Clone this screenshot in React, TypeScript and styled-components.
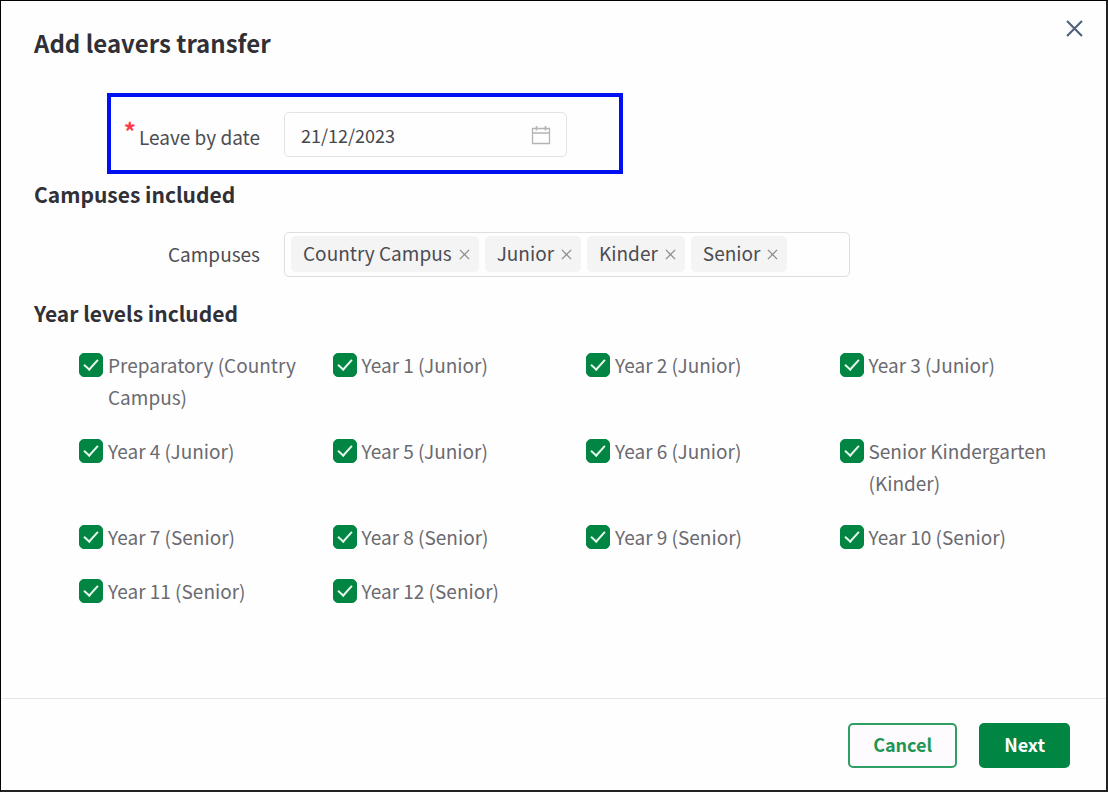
import React, { useState } from "react";
import styled, { createGlobalStyle } from "styled-components";

const GlobalStyle = createGlobalStyle`
  *, *::before, *::after { box-sizing: border-box; }
  body {
    margin: 0;
    background: #fefefe;
    color: #303036;
    font-family: "Noto Sans CJK SC", "Open Sans", sans-serif;
    font-size: 19px;
    line-height: 32px;
  }
  button, input { font: inherit; }
`;

const Dialog = styled.main`
  display: flex;
  flex-direction: column;
  min-height: 100vh;
  border: 1px solid #000;
  border-right: 2px solid #222;
  border-bottom: 2px solid #222;
  background: #fefefe;
`;

const Header = styled.header`
  display: flex;
  justify-content: space-between;
  align-items: flex-start;
  padding: 16px 20px 0 33px;
`;

const Title = styled.h1`
  margin: 10px 0 0;
  font-size: 24px;
  font-weight: 700;
  line-height: 32px;
`;

const CloseButton = styled.button`
  display: flex;
  padding: 1px;
  border: 0;
  background: none;
  color: #50607a;
  cursor: pointer;
`;

const Body = styled.form`
  display: flex;
  flex-direction: column;
  flex: 1;
`;

const Highlight = styled.div`
  width: 516px;
  max-width: calc(100% - 106px);
  margin: 34px 0 4px 106px;
  padding: 15px 0 13px;
  border: 4px solid #0010f0;
`;

const FormRow = styled.div<{ $label: number }>`
  display: grid;
  grid-template-columns: ${(p) => p.$label}px minmax(0, 1fr);
  column-gap: 24px;
  align-items: center;
`;

const FieldLabel = styled.label<{ $required?: boolean }>`
  padding-top: ${(p) => (p.$required ? 4 : 0)}px;
  padding-bottom: ${(p) => (p.$required ? 0 : 2)}px;
  text-align: right;
  color: #4c4c52;
  white-space: nowrap;
`;

const Required = styled.span`
  position: relative;
  top: -4px;
  margin-right: 3px;
  color: #ff3b46;
  font-weight: 700;
  font-size: 24px;
  line-height: 20px;
`;

const DateField = styled.div`
  display: flex;
  align-items: center;
  width: 283px;
  height: 45px;
  padding: 0 15px 0 16px;
  border: 1px solid #dfe5e2;
  border-radius: 5px;
  color: #b4b4b4;
`;

const DateInput = styled.input`
  flex: 1;
  min-width: 0;
  padding: 0;
  border: 0;
  outline: 0;
  background: none;
  color: #46464c;
  font-size: 18px;
`;

const SectionTitle = styled.h2`
  margin: 0 33px;
  font-size: 21px;
  font-weight: 700;
  line-height: 32px;
`;

const CampusRow = styled(FormRow)`
  margin: 22px 0 20px;
`;

const TagSelect = styled.div`
  display: flex;
  gap: 6px;
  width: 566px;
  max-width: 100%;
  min-height: 45px;
  padding: 3px 6px;
  border: 1px solid #dedede;
  border-radius: 5px;
`;

const Tag = styled.span`
  display: flex;
  align-items: center;
  gap: 6px;
  height: 36px;
  padding: 0 8px 3px 12px;
  border-radius: 5px;
  background: #f4f4f4;
  color: #4c4c52;
  white-space: nowrap;
`;

const TagRemove = styled.button`
  display: flex;
  padding: 3px 0 0;
  border: 0;
  background: none;
  color: #8c8c8c;
  cursor: pointer;
`;

const LevelGrid = styled.div`
  display: grid;
  grid-template-columns: repeat(4, minmax(0, 1fr));
  row-gap: 22px;
  margin: 20px 13px 32px 78px;
`;

const LevelLabel = styled.label`
  display: flex;
  align-items: flex-start;
  gap: 5px;
  padding-right: 24px;
  color: #6a6a70;
`;

const Check = styled.input`
  flex: none;
  appearance: none;
  width: 24px;
  height: 24px;
  margin: 4px 0 0;
  border: 1px solid #008542;
  border-radius: 5px;
  background: #fff;
  display: grid;
  place-items: center;

  &:checked { background: #008542; }

  &:checked::after {
    content: "";
    width: 8px;
    height: 14px;
    margin-bottom: 4px;
    border: solid #e6f7ec;
    border-width: 0 2px 2px 0;
    transform: rotate(42deg);
  }
`;

const Footer = styled.footer`
  display: flex;
  justify-content: flex-end;
  gap: 22px;
  padding: 24px 36px 22px;
  border-top: 1px solid #e6e6e6;
`;

const ActionButton = styled.button<{ $primary?: boolean }>`
  height: 45px;
  padding: 0 23px 4px;
  border: 2px solid ${(p) => (p.$primary ? "#008542" : "#2f9e62")};
  border-radius: 5px;
  background: ${(p) => (p.$primary ? "#008542" : "#fefbfe")};
  color: ${(p) => (p.$primary ? "#fff" : "#1f9653")};
  font-size: 18px;
  font-weight: 700;
  line-height: 24px;
  cursor: pointer;
`;

const Cross = ({ size, weight }: { size: number; weight: number }) => (
  <svg width={size} height={size} viewBox="0 0 24 24" fill="none" stroke="currentColor" strokeWidth={weight} aria-hidden="true">
    <path d="M3.5 3.5 20.5 20.5M20.5 3.5 3.5 20.5" />
  </svg>
);

const CalendarIcon = () => (
  <svg width="20" height="20" viewBox="0 0 20 20" fill="none" stroke="currentColor" aria-hidden="true">
    <path d="M1.5 3.5h17v15h-17zM1.5 8h17" strokeWidth="1.3" />
    <path d="M5.5 1v4.5M14.5 1v4.5" strokeWidth="1.6" />
  </svg>
);

const levels = [
  "Preparatory (Country Campus)",
  "Year 1 (Junior)",
  "Year 2 (Junior)",
  "Year 3 (Junior)",
  "Year 4 (Junior)",
  "Year 5 (Junior)",
  "Year 6 (Junior)",
  "Senior Kindergarten (Kinder)",
  "Year 7 (Senior)",
  "Year 8 (Senior)",
  "Year 9 (Senior)",
  "Year 10 (Senior)",
  "Year 11 (Senior)",
  "Year 12 (Senior)",
];

export default function App() {
  const [campuses, setCampuses] = useState(["Country Campus", "Junior", "Kinder", "Senior"]);

  return (
    <>
      <GlobalStyle />
      <Dialog>
        <Header>
          <Title>Add leavers transfer</Title>
          <CloseButton type="button" aria-label="Close">
            <Cross size={21} weight={2.4} />
          </CloseButton>
        </Header>
        <Body id="transfer" onSubmit={(e) => e.preventDefault()}>
          <Highlight>
            <FormRow $label={149}>
              <FieldLabel htmlFor="leave-date" $required>
                <Required>*</Required>Leave by date
              </FieldLabel>
              <DateField>
                <DateInput id="leave-date" type="text" defaultValue="21/12/2023" />
                <CalendarIcon />
              </DateField>
            </FormRow>
          </Highlight>
          <SectionTitle>Campuses included</SectionTitle>
          <CampusRow $label={259}>
            <FieldLabel as="span" id="campuses-label">Campuses</FieldLabel>
            <TagSelect role="group" aria-labelledby="campuses-label">
              {campuses.map((name) => (
                <Tag key={name}>
                  {name}
                  <TagRemove
                    type="button"
                    aria-label={`Remove ${name}`}
                    onClick={() => setCampuses(campuses.filter((c) => c !== name))}
                  >
                    <Cross size={13} weight={2.4} />
                  </TagRemove>
                </Tag>
              ))}
            </TagSelect>
          </CampusRow>
          <SectionTitle>Year levels included</SectionTitle>
          <LevelGrid>
            {levels.map((level) => (
              <LevelLabel key={level}>
                <Check type="checkbox" defaultChecked />
                <span>{level}</span>
              </LevelLabel>
            ))}
          </LevelGrid>
        </Body>
        <Footer>
          <ActionButton type="button">Cancel</ActionButton>
          <ActionButton type="submit" form="transfer" $primary>Next</ActionButton>
        </Footer>
      </Dialog>
    </>
  );
}
